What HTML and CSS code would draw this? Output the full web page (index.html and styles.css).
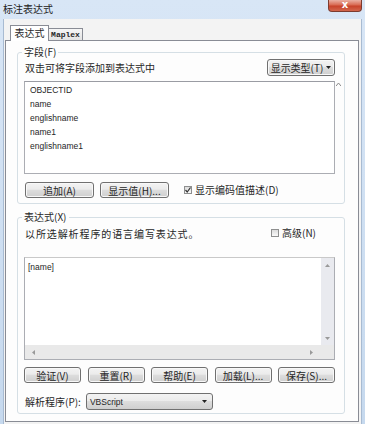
FILE: index.html
```html
<!DOCTYPE html>
<html lang="zh-CN">
<head>
    <meta charset="UTF-8">
    <meta name="viewport" content="width=device-width, initial-scale=1.0">
    <title>标注表达式</title>
    <link rel="stylesheet" href="styles.css">
</head>
<body>
    <div class="window">
        <div class="titlebar">
            <span class="title">标注表达式</span>
            <div class="close">x</div>
        </div>

        <div class="client">
            <div class="tabs">
                <div class="tab active">表达式</div>
                <div class="tab mono">Maplex</div>
            </div>

            <div class="panel">
                <!-- 字段 -->
                <div class="group fields">
                    <span class="group-label">字段(F)</span>
                    <div class="row top-row">
                        <span>双击可将字段添加到表达式中</span>
                        <button class="btn menu-btn">显示类型(T)
                            <svg width="5" height="3" viewBox="0 0 5 3"><path d="M0 0h5L2.5 3z" fill="#222"/></svg>
                        </button>
                    </div>
                    <div class="list-wrap">
                        <ul class="field-list">
                            <li>OBJECTID</li>
                            <li>name</li>
                            <li>englishname</li>
                            <li>name1</li>
                            <li>englishname1</li>
                        </ul>
                        <svg class="list-arrow" width="5" height="4" viewBox="0 0 5 4"><path d="M0 3L2.5 0 5 3" fill="none" stroke="#888" stroke-width="1"/></svg>
                    </div>
                    <div class="row btn-row">
                        <button class="btn wide">追加(A)</button>
                        <button class="btn wide">显示值(H)...</button>
                        <label class="check on">
                            <span class="box"><svg width="6" height="6" viewBox="0 0 6 6"><path d="M0.5 3l1.7 2L5.5 0.5" fill="none" stroke="#333" stroke-width="1.2"/></svg></span>
                            显示编码值描述(D)
                        </label>
                    </div>
                </div>

                <!-- 表达式 -->
                <div class="group expr">
                    <span class="group-label">表达式(X)</span>
                    <div class="row text-row">
                        <span class="spaced">以所选解析程序的语言编写表达式。</span>
                        <label class="check advanced"><span class="box"></span>高级(N)</label>
                    </div>
                    <div class="editor">
                        <div class="code">[name]</div>
                        <div class="vscroll">
                            <svg width="5" height="3" viewBox="0 0 5 3"><path d="M0 3h5L2.5 0z" fill="#999"/></svg>
                            <svg width="5" height="3" viewBox="0 0 5 3"><path d="M0 0h5L2.5 3z" fill="#999"/></svg>
                        </div>
                        <div class="hscroll">
                            <svg width="3" height="5" viewBox="0 0 3 5"><path d="M3 0v5L0 2.5z" fill="#999"/></svg>
                            <svg width="3" height="5" viewBox="0 0 3 5"><path d="M0 0v5L3 2.5z" fill="#999"/></svg>
                        </div>
                        <div class="corner"></div>
                    </div>
                    <div class="row actions">
                        <button class="btn">验证(V)</button>
                        <button class="btn">重置(R)</button>
                        <button class="btn">帮助(E)</button>
                        <button class="btn">加载(L)...</button>
                        <button class="btn">保存(S)...</button>
                    </div>
                    <div class="row parser-row">
                        <span>解析程序(P):</span>
                        <div class="select">
                            <span>VBScript</span>
                            <svg width="5" height="3" viewBox="0 0 5 3"><path d="M0 0h5L2.5 3z" fill="#222"/></svg>
                        </div>
                    </div>
                </div>
            </div>
        </div>
    </div>
</body>
</html>
```

FILE: styles.css
```css
body {
    margin: 0;
    font-family: "Noto Sans CJK SC", sans-serif;
    font-size: 10px;
    color: #262626;
}
.window {
    width: 365px;
    height: 424px;
    display: flex;
    flex-direction: column;
    background: linear-gradient(#d8e6f6, #c6d9ee);
}
.titlebar {
    height: 19px;
    display: flex;
    align-items: flex-start;
}
.title {
    padding: 3px 0 0 3px;
    line-height: 12px;
    color: #222;
}
.close {
    margin-left: auto;
    margin-right: 3px;
    width: 34px;
    height: 12px;
    box-sizing: border-box;
    border: 1px solid #7d3b2f;
    border-top: none;
    border-radius: 0 0 4px 4px;
    background: linear-gradient(#eab0a3, #d96a52 45%, #c8422a 55%, #d2664c);
    color: #fff;
    font-family: "DejaVu Sans", sans-serif;
    font-weight: bold;
    font-size: 10px;
    line-height: 10px;
    text-align: center;
}
.client {
    flex: 1;
    margin: 0 3px;
    padding-bottom: 2px;
    border-left: 1px solid #a8bbd2;
    border-right: 1px solid #a8bbd2;
    background: #f3f3f3;
    display: flex;
    flex-direction: column;
}
.tabs {
    display: flex;
    align-items: flex-end;
    padding: 6px 0 0 6px;
    margin-bottom: -1px;
    position: relative;
    z-index: 1;
}
.tab {
    box-sizing: border-box;
    border: 1px solid #898c95;
    border-bottom: none;
    text-align: center;
}
.tab.active {
    width: 39px;
    height: 16px;
    line-height: 14px;
    background: #fff;
}
.tab.mono {
    width: 34px;
    height: 12px;
    margin-bottom: 1px;
    border-left: none;
    background: linear-gradient(#f6f6f6, #e3e3e3);
    font-family: "Liberation Mono", monospace;
    font-weight: bold;
    font-size: 8px;
    line-height: 12px;
}
.panel {
    margin: 0 2px 0 1px;
    padding: 11px 13px 7px 11px;
    border: 1px solid #898c95;
    background: #fdfdfd;
}
.group {
    position: relative;
    border: 1px solid #d5dfe5;
    border-radius: 3px;
    padding: 0 9px 0 6px;
}
.group-label {
    position: absolute;
    top: -7px;
    left: 4px;
    padding: 0 2px;
    line-height: 12px;
    background: #fdfdfd;
}
.fields {
    padding-top: 6px;
    padding-bottom: 5px;
}
.expr {
    margin-top: 13px;
    padding-top: 8px;
    padding-bottom: 3px;
}
.row {
    display: flex;
    align-items: center;
}
.top-row {
    justify-content: space-between;
    height: 17px;
    padding-left: 1px;
}
.btn {
    box-sizing: border-box;
    height: 16px;
    padding: 0;
    border: 1px solid #707070;
    border-radius: 3px;
    background: linear-gradient(#f3f3f3, #ebebeb 45%, #dddddd 50%, #cfcfcf);
    box-shadow: inset 0 0 0 1px #f8f8f8;
    font: inherit;
    line-height: 13px;
    color: #262626;
}
.menu-btn {
    width: 68px;
    height: 17px;
    display: flex;
    align-items: center;
    justify-content: center;
    gap: 3px;
}
.list-wrap {
    position: relative;
    margin-top: 5px;
}
.field-list {
    list-style: none;
    margin: 0;
    padding: 1px 0 0 5px;
    height: 93px;
    box-sizing: border-box;
    border: 1px solid #abadb3;
    border-top-color: #9a9ca3;
    background: #fff;
    font-family: "Liberation Sans", sans-serif;
    font-size: 8.5px;
}
.field-list li {
    line-height: 14px;
}
.list-arrow {
    position: absolute;
    top: 2px;
    right: -6px;
}
.btn-row {
    margin-top: 8px;
    padding-left: 1px;
    gap: 6px;
}
.btn.wide {
    width: 69px;
}
.check {
    display: flex;
    align-items: center;
    gap: 3px;
    line-height: 14px;
}
.btn-row .check {
    margin-left: 9px;
}
.box {
    width: 8px;
    height: 8px;
    box-sizing: border-box;
    border: 1px solid #8e8f8f;
    background: linear-gradient(#dcdcdc, #fafafa);
    display: flex;
    align-items: center;
    justify-content: center;
}
.text-row {
    height: 14px;
    padding-left: 1px;
}
.spaced {
    letter-spacing: 0.9px;
}
.advanced {
    margin-left: auto;
    margin-right: 19px;
}
.editor {
    margin-top: 17px;
    height: 103px;
    box-sizing: border-box;
    border: 1px solid #abadb3;
    border-top-color: #c9c9c9;
    background: #fff;
    display: grid;
    grid-template-columns: 1fr 13px;
    grid-template-rows: 1fr 14px;
}
.code {
    padding: 2px 3px;
    font-family: "Liberation Sans", sans-serif;
    font-size: 8.5px;
    line-height: 14px;
}
.vscroll {
    background: #e9eaef;
    display: flex;
    flex-direction: column;
    justify-content: space-between;
    align-items: center;
    padding: 6px 0 5px;
}
.hscroll {
    background: #e9e9e9;
    display: flex;
    justify-content: space-between;
    align-items: center;
    padding: 0 8px 0 7px;
}
.corner {
    background: #e9e9e9;
}
.actions {
    margin-top: 7px;
    justify-content: space-between;
}
.actions .btn {
    width: 57px;
}
.parser-row {
    margin-top: 10px;
    height: 17px;
    padding-left: 1px;
    gap: 5px;
}
.select {
    width: 127px;
    height: 17px;
    box-sizing: border-box;
    border: 1px solid #707070;
    border-radius: 3px;
    background: linear-gradient(#f3f3f3, #ebebeb 45%, #dddddd 50%, #cfcfcf);
    display: flex;
    align-items: center;
    justify-content: space-between;
    padding: 0 5px 0 3px;
    font-family: "Liberation Sans", sans-serif;
    font-size: 8.5px;
}
```
